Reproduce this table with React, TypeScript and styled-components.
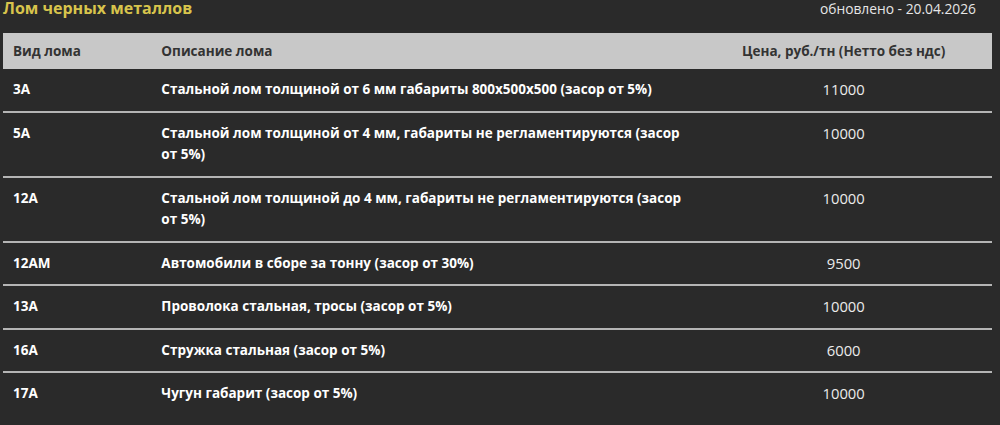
import React from "react";
import styled, { createGlobalStyle } from "styled-components";

const Global = createGlobalStyle`
  html, body { margin: 0; padding: 0; background: #2a2a2a; }
  body { font-family: "Open Sans", "Noto Sans", "DejaVu Sans", sans-serif; }
`;

const Page = styled.div`
  width: 1000px;
  height: 425px;
  overflow: hidden;
  background: #2a2a2a;
  padding: 0 8px 0 3px;
  box-sizing: border-box;
`;

const TopBar = styled.div`
  display: flex;
  justify-content: space-between;
  align-items: baseline;
  height: 36px;
  margin-top: -3px;
  padding-right: 16px;
`;

const Title = styled.h2`
  margin: 0;
  font-size: 16px;
  line-height: 22px;
  font-weight: 700;
  color: #d8c44c;
`;

const Updated = styled.span`
  font-size: 13.8px;
  line-height: 22px;
  color: #e6e6e6;
`;

const Table = styled.table`
  width: 989px;
  border-collapse: collapse;
  table-layout: fixed;
  font-size: 13.5px;
`;

const Head = styled.th<{ $align?: string; $w: string }>`
  box-sizing: border-box;
  width: ${(p) => p.$w};
  background: #c8c8c8;
  color: #333;
  font-weight: 700;
  text-align: ${(p) => p.$align || "left"};
  padding: 7px 10px;
  height: 36px;
  line-height: 22px;
`;

const Row = styled.tr`
  border-bottom: 2px solid #b4b4b4;
  &:last-child {
    border-bottom: none;
  }
`;

const Cell = styled.td<{ $align?: string; $bold?: boolean }>`
  box-sizing: border-box;
  vertical-align: top;
  text-align: ${(p) => p.$align || "left"};
  font-weight: ${(p) => (p.$bold ? 700 : 400)};
  font-size: ${(p) => (p.$bold ? "13.5px" : "14.8px")};
  color: ${(p) => (p.$bold ? "#fff" : "#ececec")};
  padding: 10px 10px;
  line-height: 21.5px;
`;

const rows: [string, string, string][] = [
  ["3А", "Стальной лом толщиной от 6 мм габариты 800х500х500 (засор от 5%)", "11000"],
  ["5А", "Стальной лом толщиной от 4 мм, габариты не регламентируются (засор от 5%)", "10000"],
  ["12А", "Стальной лом толщиной до 4 мм, габариты не регламентируются (засор от 5%)", "10000"],
  ["12АМ", "Автомобили в сборе за тонну (засор от 30%)", "9500"],
  ["13А", "Проволока стальная, тросы (засор от 5%)", "10000"],
  ["16А", "Стружка стальная (засор от 5%)", "6000"],
  ["17А", "Чугун габарит (засор от 5%)", "10000"],
];

export default function App() {
  return (
    <Page>
      <Global />
      <TopBar>
        <Title>Лом черных металлов</Title>
        <Updated>обновлено - 20.04.2026</Updated>
      </TopBar>
      <Table>
        <thead>
          <tr>
            <Head $w="15%">Вид лома</Head>
            <Head $w="55%">Описание лома</Head>
            <Head $w="30%" $align="center">Цена, руб./тн (Нетто без ндс)</Head>
          </tr>
        </thead>
        <tbody>
          {rows.map(([k, d, p]) => (
            <Row key={k}>
              <Cell $bold>{k}</Cell>
              <Cell $bold>{d}</Cell>
              <Cell $align="center">{p}</Cell>
            </Row>
          ))}
        </tbody>
      </Table>
    </Page>
  );
}
